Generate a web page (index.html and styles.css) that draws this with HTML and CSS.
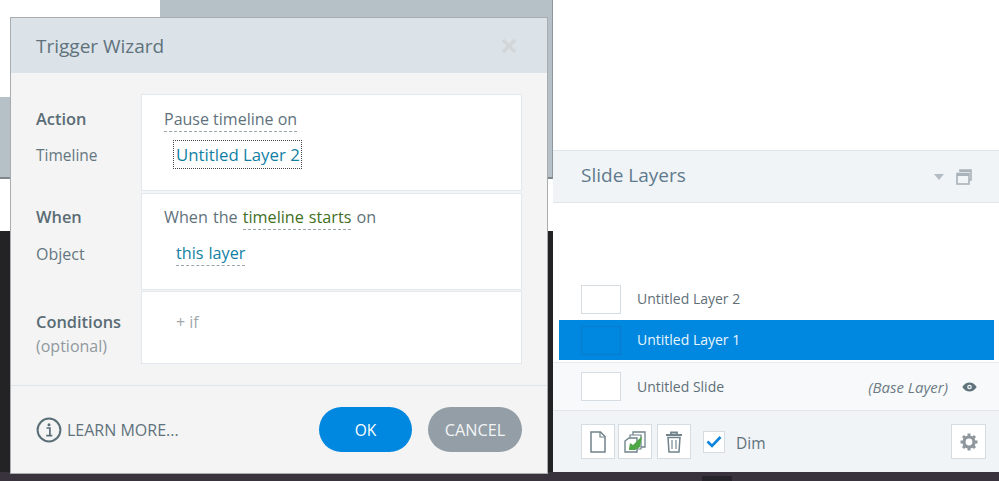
FILE: index.html
```html
<!DOCTYPE html>
<html lang="en">
<head>
<meta charset="utf-8">
<title>Trigger Wizard</title>
<link rel="stylesheet" href="styles.css">
</head>
<body>
<div class="desk">
  <div class="bg bg-gray-top"></div>
  <div class="bg bg-gray-left"></div>
  <div class="bg bg-dark"></div>
  <div class="bg bg-strip"></div>
  <div class="bg bg-patch"></div>

  <section class="dialog">
    <header class="dlg-head">
      <h1 class="dlg-title">Trigger Wizard</h1>
      <svg class="dlg-close" width="16" height="16" viewBox="0 0 16 16"><path d="M2 2L14 14M14 2L2 14" stroke="#d3d6d8" stroke-width="3.4" fill="none"/></svg>
    </header>
    <div class="dlg-body">
      <div class="rule">
        <div class="labels labels-a">
          <div class="lab-strong">Action</div>
          <div class="lab">Timeline</div>
        </div>
        <div class="card card-a">
          <div class="line"><span class="dash">Pause timeline on</span></div>
          <div class="line sub"><span class="link focus">Untitled Layer 2</span></div>
        </div>
      </div>
      <div class="rule">
        <div class="labels labels-b">
          <div class="lab-strong">When</div>
          <div class="lab">Object</div>
        </div>
        <div class="card card-b">
          <div class="line">When the <span class="green dash">timeline starts</span> on</div>
          <div class="line sub sub-b"><span class="link dash">this layer</span></div>
        </div>
      </div>
      <div class="rule">
        <div class="labels labels-c">
          <div class="lab-strong">Conditions</div>
          <div class="lab lab-muted">(optional)</div>
        </div>
        <div class="card card-c">
          <div class="line sub if">+ if</div>
        </div>
      </div>
    </div>
    <footer class="dlg-foot">
      <svg class="info" width="26" height="26" viewBox="0 0 26 26"><circle cx="13" cy="13" r="11.4" fill="none" stroke="#5a6e78" stroke-width="2"/><circle cx="13" cy="7.8" r="1.5" fill="#5a6e78"/><path d="M10.5 11h3.4v7M10.3 18.6h6" fill="none" stroke="#5a6e78" stroke-width="1.7"/></svg>
      <span class="learn">LEARN MORE...</span>
      <button class="btn btn-ok">OK</button>
      <button class="btn btn-cancel">CANCEL</button>
    </footer>
  </section>

  <section class="panel">
    <div class="panel-top"></div>
    <header class="panel-head">
      <h2 class="panel-title">Slide Layers</h2>
      <svg class="caret" width="10" height="6" viewBox="0 0 10 6"><path d="M0 0H10L5 6Z" fill="#b4bcc3"/></svg>
      <svg class="popout" width="16" height="16" viewBox="0 0 16 16"><g fill="none" stroke="#aab3ba" stroke-width="1.6"><path d="M4 3V1h11v10h-2"/><rect x="1" y="4.5" width="12" height="10.5"/></g><path d="M1 4h12v3H1zM4 1h11v2H4z" fill="#aab3ba"/></svg>
    </header>
    <div class="layers">
      <div class="row row-2"><span class="thumb"></span><span class="row-name">Untitled Layer 2</span></div>
      <div class="row row-sel"><span class="thumb"></span><span class="row-name">Untitled Layer 1</span></div>
      <div class="row row-base">
        <span class="thumb"></span><span class="row-name">Untitled Slide</span>
        <span class="base-tag">(Base Layer)</span>
        <svg class="eye" width="15" height="10" viewBox="0 0 15 10"><path d="M0.3 5C2.3 1.8 4.8 0.4 7.5 0.4S12.7 1.8 14.7 5C12.7 8.2 10.2 9.6 7.5 9.6S2.3 8.2 .3 5Z" fill="#5f737d"/><circle cx="7.5" cy="5" r="2.3" fill="#f8f9fa"/><circle cx="7.5" cy="5" r="1.1" fill="#5f737d"/></svg>
      </div>
    </div>
    <div class="toolbar">
      <span class="tool">
        <svg width="16" height="22" viewBox="0 0 16 22"><path d="M1 1h9.5L15 5.500V21H1Z" fill="#fff" stroke="#71838b" stroke-width="1.5"/><path d="M10 1v5h5" fill="none" stroke="#71838b" stroke-width="1.2"/></svg>
      </span>
      <span class="tool">
        <svg width="22" height="22" viewBox="0 0 22 22"><path d="M9 4V1h12v15h-4" fill="#fff" stroke="#71838b" stroke-width="1.3"/><path d="M6 7V4h11v14h-4" fill="#fff" stroke="#71838b" stroke-width="1.2"/><path d="M1 10l4-3h8v14H1Z" fill="#fff" stroke="#71838b" stroke-width="1.4"/><path d="M5 18l1-6 3 2 9-9-2 11-5 3H5Z" fill="#4ea646"/></svg>
      </span>
      <span class="tool">
        <svg width="18" height="22" viewBox="0 0 18 22"><path d="M1 4h16M6 4V1.5h6V4" fill="none" stroke="#71838b" stroke-width="1.8"/><path d="M3 6.5l1 14.500h10l1-14.500Z" fill="#fff" stroke="#71838b" stroke-width="1.5"/><path d="M7 9v9M11 9v9" stroke="#a5b0b6" stroke-width="1.8"/></svg>
      </span>
      <span class="check">
        <svg width="16" height="13" viewBox="0 0 16 13"><path d="M1.5 6.5L6 11 14.5 2" fill="none" stroke="#0a84dc" stroke-width="2.6"/></svg>
      </span>
      <span class="dim">Dim</span>
      <span class="tool tool-gear">
        <svg width="18" height="18" viewBox="0 0 18 18"><circle cx="9" cy="9" r="5" fill="none" stroke="#8e979d" stroke-width="3.2"/><path d="M9 .5V4M9 14v3.5M.5 9H4M14 9h3.5M3 3l2.5 2.5M12.5 12.5L15 15M15 3l-2.5 2.5M5.5 12.5L3 15" stroke="#8e979d" stroke-width="3"/></svg>
      </span>
    </div>
  </section>
</div>
</body>
</html>
```
FILE: styles.css
```css
* { box-sizing: border-box; }
html, body { margin: 0; padding: 0; }
body { font-family: "Open Sans", "Liberation Sans", sans-serif; color: #5d6e77; }
.desk { position: relative; width: 999px; height: 481px; overflow: hidden; background: #fff; }
.bg { position: absolute; }
.bg-gray-top { left: 160px; top: 0; width: 393px; height: 179px; background: #b5c0c7; border-right: 1px solid #8e979d; border-bottom: 2px solid #80878c; }
.bg-gray-left { left: 0; top: 97px; width: 160px; height: 82px; background: #b5c0c7; border-bottom: 2px solid #80878c; }
.bg-dark { left: 0; top: 231px; width: 553px; height: 250px; background: #232224; }
.bg-strip { left: 0; top: 472px; width: 999px; height: 9px; background: #38333d; }
.bg-patch { left: 702px; top: 476px; width: 30px; height: 5px; background: #26232a; }

.dialog { position: absolute; left: 10px; top: 17px; width: 538px; height: 457px; display: flex; flex-direction: column; background: #f4f4f4; border: 1.5px solid #a9adb0; }
.dlg-head { height: 55px; flex: none; display: flex; align-items: center; justify-content: space-between; padding: 0 30px 0 25px; background: #dbe2e8; }
.dlg-title { margin: 0; font-size: 19px; font-weight: 400; color: #5f727c; }
.dlg-body { flex: none; height: 312px; padding-top: 21px; display: flex; flex-direction: column; }
.rule { display: flex; }
.labels { width: 130px; padding-left: 25px; flex: none; }
.labels-a { padding-top: 13px; }
.labels-b { padding-top: 12px; }
.labels-c { padding-top: 19px; }
.lab-strong { font-size: 16.4px; font-weight: 600; line-height: 24px; color: #5a6c75; }
.lab { font-size: 16px; line-height: 24px; margin-top: 13px; color: #647780; }
.labels-a .lab { font-size: 15.5px; margin-top: 12px; }
.labels-c .lab { margin-top: 0; }
.lab-muted { color: #90999f; }
.card { width: 381px; background: #fff; border: 1px solid #e2e8ee; padding-left: 22px; }
.card-a { height: 97px; padding-top: 12px; margin-bottom: 2px; }
.card-b { height: 97px; padding-top: 11px; margin-bottom: 1px; }
.card-c { height: 73px; padding-top: 18px; }
.line { font-size: 16px; line-height: 24px; color: #5f727c; white-space: nowrap; }
.card-b .line { font-size: 16.2px; word-spacing: 0.8px; }
.dash { border-bottom: 1px dashed #9aa5ab; padding-bottom: 1px; }
.sub { padding-left: 12px; margin-top: 12px; }
.card-c .sub { margin-top: 0; }
.link { color: #117fa3; }
.focus { font-size: 16.8px; outline: 1px dotted #444; padding: 2px 1px 2px 2px; margin-left: -2px; }
.green { color: #3f6f1f; }
.if { color: #a1a8ad; }
.dlg-foot { flex: 1; display: flex; align-items: center; padding: 0 25px; border-top: 1px solid #dfe6eb; }
.info { flex: none; }
.learn { font-size: 16px; color: #5f727c; margin-left: 5px; margin-right: auto; }
.btn { height: 45px; width: 94px; border: 0; border-radius: 23px; color: #fff; font-family: inherit; font-size: 15.5px; padding: 0; }
.btn-ok { background: #0087df; width: 93px; }
.btn-cancel { background: #939ea6; margin-left: 16px; color: #f2f4f5; font-size: 16.3px; }

.panel { position: absolute; left: 553px; top: 0; width: 446px; height: 472px; display: flex; flex-direction: column; background: #fff; }
.panel-top { height: 150px; flex: none; }
.panel-head { height: 53px; flex: none; display: flex; align-items: center; padding: 0 27px 4px 28px; background: #f0f4f7; border-top: 1px solid #dfe6eb; border-bottom: 1px solid #dfe6eb; }
.panel-title { margin: 0 auto 0 0; font-size: 19px; font-weight: 400; color: #5f7a8c; }
.caret { margin: 4px 12px 0 0; }
.popout { margin-top: 4px; }
.layers { flex: 1; display: flex; flex-direction: column; justify-content: flex-end; }
.row { display: flex; align-items: center; padding-left: 28px; font-size: 14px; font-weight: 500; color: #5f6f78; }
.row-2 { height: 40px; padding-bottom: 2px; }
.row-2 .row-name, .row-sel .row-name { margin-bottom: 2px; }
.row-sel { height: 40px; margin: 0 5px 0 6px; padding-left: 22px; background: #0087df; color: #e9f5fd; }
.row-base { height: 49px; margin-top: 2px; background: #f8f9fa; border-top: 1px solid #e7ebee; border-bottom: 1px solid #e2e6e9; padding-right: 22px; }
.thumb { width: 40px; height: 29px; background: #fff; border: 1.5px solid #d5dde3; margin-right: 16px; flex: none; }
.row-sel .thumb { background: #0087df; border-color: #0b7ccb; }
.base-tag { margin-left: auto; font-style: italic; font-weight: 400; font-size: 15px; color: #6c7c85; margin-right: 14px; }
.toolbar { height: 61px; flex: none; display: flex; align-items: center; padding: 0 13px 0 28px; background: #f1f4f7; }
.tool { width: 34px; height: 35px; background: #fff; border: 1.5px solid #d5dde3; display: flex; align-items: center; justify-content: center; margin-right: 3px; flex: none; }
.tool + .tool + .tool { margin-left: 2px; }
.check { width: 22px; height: 22px; margin-left: 9px; background: #fff; border: 1.5px solid #d5dde3; display: flex; align-items: center; justify-content: center; }
.dim { font-size: 15.5px; margin: 3px auto 0 11px; color: #5f727c; }
.tool-gear { margin-right: 0; width: 35px; }
```
